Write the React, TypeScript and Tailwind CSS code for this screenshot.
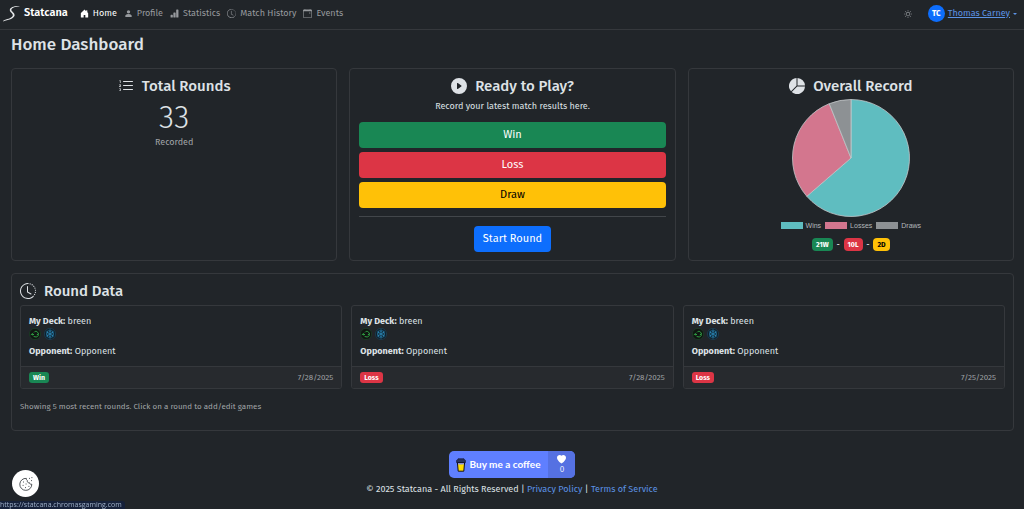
import React from 'react';
import {
  BsBarChartFill,
  BsCalendarEvent,
  BsClockHistory,
  BsHeartFill,
  BsHouseDoorFill,
  BsListOl,
  BsPersonFill,
  BsPieChartFill,
  BsPlayCircleFill,
  BsSun,
} from 'react-icons/bs';

const navItems = [
  { label: 'Home', icon: BsHouseDoorFill, active: true },
  { label: 'Profile', icon: BsPersonFill, active: false },
  { label: 'Statistics', icon: BsBarChartFill, active: false },
  { label: 'Match History', icon: BsClockHistory, active: false },
  { label: 'Events', icon: BsCalendarEvent, active: false },
];

const rounds = [
  { deck: 'breen', opponent: 'Opponent', result: 'Win', date: '7/28/2025' },
  { deck: 'breen', opponent: 'Opponent', result: 'Loss', date: '7/28/2025' },
  { deck: 'breen', opponent: 'Opponent', result: 'Loss', date: '7/25/2025' },
];

const record = [
  { label: 'Wins', count: 21, color: '#5fbdc0' },
  { label: 'Losses', count: 10, color: '#d3768e' },
  { label: 'Draws', count: 2, color: '#8d9194' },
];

function Logo() {
  return (
    <svg viewBox="0 0 18 17" className="h-[17px] w-[18px]" fill="#e4e6e8">
      <path d="M17 1.2C12 1.4 8.2 3 8.4 5C8.6 6.8 12 7.8 11.6 10.6C11 13.8 5 15.2 0.2 16.4C0.2 15.6 0.8 15.2 1.6 15C5.4 14 9.2 12.8 9.8 10.6C10.4 8.4 6.6 7.4 6.8 5C7 2.4 11.6 0.6 17 1.2Z" />
    </svg>
  );
}

function Navbar() {
  return (
    <nav className="flex h-[30px] items-center border-b border-[#35383c] pr-[7px] pb-0.5 pl-[3px]">
      <a href="#home" className="flex items-center gap-[3px] text-[11px] font-semibold text-white">
        <Logo />
        Statcana
      </a>
      <ul className="ml-3 flex items-center gap-[7px]">
        {navItems.map(({ label, icon: Icon, active }) => (
          <li key={label}>
            <a
              href="#nav"
              className={
                active
                  ? 'flex items-center gap-1 text-[9px] text-white'
                  : 'flex items-center gap-1 text-[9px] text-[#979a9e]'
              }
            >
              <Icon className="size-[9px]" />
              {label}
            </a>
          </li>
        ))}
      </ul>
      <button type="button" aria-label="Toggle theme" className="ml-auto text-[#b4b8bb]">
        <BsSun className="size-2" />
      </button>
      <a href="#account" className="ml-4 flex items-center gap-[3px] text-[9px] text-[#5c93e6]">
        <span className="flex size-[17px] items-center justify-center rounded-full bg-[#0d6efd] text-[8px] font-bold text-white">
          TC
        </span>
        <span className="underline">Thomas Carney</span>
        <span className="border-x-2 border-t-2 border-x-transparent border-t-[#5c93e6]" />
      </a>
    </nav>
  );
}

function CardTitle({ icon: Icon, children }: { icon: React.ElementType; children: React.ReactNode }) {
  return (
    <h2 className="flex items-center justify-center gap-2 text-[15px] leading-[18px] font-medium">
      <Icon className="size-4" />
      {children}
    </h2>
  );
}

function RecordPie() {
  const total = record.reduce((sum, r) => sum + r.count, 0);
  let angle = 0;
  return (
    <svg viewBox="0 0 118 118" className="size-[118px]" role="img" aria-label="Overall record">
      {record.map((r) => {
        const start = angle;
        angle += (r.count / total) * Math.PI * 2;
        const large = r.count / total > 0.5 ? 1 : 0;
        const x1 = 59 + 58.5 * Math.sin(start);
        const y1 = 59 - 58.5 * Math.cos(start);
        const x2 = 59 + 58.5 * Math.sin(angle);
        const y2 = 59 - 58.5 * Math.cos(angle);
        return (
          <path
            key={r.label}
            d={`M59 59L${x1} ${y1}A58.5 58.5 0 ${large} 1 ${x2} ${y2}Z`}
            fill={r.color}
            stroke="#c4c8ca"
            strokeWidth="0.8"
          />
        );
      })}
    </svg>
  );
}

function RecycleIcon() {
  return (
    <svg viewBox="0 0 12 12" className="size-3" fill="none">
      <circle cx="6" cy="6" r="5.6" fill="#101512" stroke="#1d4a26" strokeWidth="0.6" />
      <path
        d="M1.8 6.8L3.6 5.6L5 7M3.6 5.8V7.4M5 4.4C5.8 3 7.8 3 8.6 4.2M8.6 4.2L9.6 6L7.8 6.8M9.4 6.4C9.6 8.4 7.6 9.4 6 8.8L4.6 8.4"
        stroke="#2fa043"
      />
    </svg>
  );
}

function SnowflakeIcon() {
  return (
    <svg viewBox="0 0 12 12" className="size-3" fill="none">
      <circle cx="6" cy="6" r="5.6" fill="#10202b" stroke="#1c4a63" strokeWidth="0.6" />
      <path
        d="M6 1.4V10.6M2.2 3.8L9.8 8.2M9.8 3.8L2.2 8.2M4.6 2.2L6 3.6L7.4 2.2M4.6 9.8L6 8.4L7.4 9.8M2 5.4L3.8 4.8L3.6 2.8M10 5.4L8.2 4.8L8.4 2.8M2 6.6L3.8 7.2L3.6 9.2M10 6.6L8.2 7.2L8.4 9.2"
        stroke="#2c8cbd"
        strokeWidth="0.8"
      />
    </svg>
  );
}

function RoundCard({ round }: { round: (typeof rounds)[number] }) {
  return (
    <article className="overflow-hidden rounded-[3px] border border-[#35383c]">
      <div className="h-[60px] px-2 pt-[9px] text-[9px] leading-3">
        <p><strong>My Deck:</strong> {round.deck}</p>
        <div className="mt-px flex gap-[3px]">
          <RecycleIcon />
          <SnowflakeIcon />
        </div>
        <p className="mt-[5px]"><strong>Opponent:</strong> {round.opponent}</p>
      </div>
      <footer className="flex h-[22px] items-center justify-between border-t border-[#35383c] bg-[#272a2e] px-2">
        <span
          className={
            round.result === 'Win'
              ? 'rounded-[3px] bg-[#198754] px-1 text-[7px] leading-[11px] font-bold text-white'
              : 'rounded-[3px] bg-[#dc3545] px-1 text-[7px] leading-[11px] font-bold text-white'
          }
        >
          {round.result}
        </span>
        <time className="text-[8px] text-[#a0a4a7]">{round.date}</time>
      </footer>
    </article>
  );
}

function CoffeeCup() {
  return (
    <svg viewBox="0 0 10 14" className="h-[14px] w-[10px]">
      <path d="M1.4 4.4L2.2 13.2H7.8L8.6 4.4Z" fill="#ffdd00" stroke="#0d0c22" />
      <path d="M2 0.8H8L8.8 2.4H9.4V4.6H0.6V2.4H1.2Z" fill="#27345f" stroke="#0d0c22" strokeWidth="0.6" />
      <path d="M2 5H8L7.8 6.6H2.2Z" fill="#8893d8" />
    </svg>
  );
}

function CookieIcon() {
  return (
    <svg viewBox="0 0 16 16" className="size-4" fill="none" stroke="#3f4448" strokeWidth="0.9">
      <path d="M8.4 2.4A6 6 0 1 0 13.8 8.2C12.6 8.6 11.6 8 11.6 6.8C10 7 9 6 9.4 4.6C8.6 4.2 8.2 3.4 8.4 2.4Z" />
      <path d="M5 6h1M7.6 8h1M4.6 9.4h1M7 11.6h1M10.4 10.4h1M11 2.4h1M13.4 1.6h1M13 4.6h1" />
    </svg>
  );
}

export default function App() {
  return (
    <div className="flex min-h-screen flex-col bg-[#212529] font-['Fira_Sans','Noto_Sans',sans-serif] text-[#dee2e6]">
      <Navbar />
      <main className="pr-[10px] pl-[11px]">
        <h1 className="mt-1 text-[17px] leading-[22px] font-medium">Home Dashboard</h1>

        <div className="mt-3 grid grid-cols-3 gap-3">
          <section className="rounded-[4px] border border-[#35383c] px-[9px] pt-2 text-center">
            <CardTitle icon={BsListOl}>Total Rounds</CardTitle>
            <p className="mt-1 text-[31px] leading-[38px] font-light">33</p>
            <p className="text-[9px] leading-[11px] text-[#a0a4a7]">Recorded</p>
          </section>

          <section className="rounded-[4px] border border-[#35383c] px-[9px] pt-2 pb-2 text-center">
            <CardTitle icon={BsPlayCircleFill}>Ready to Play?</CardTitle>
            <p className="mt-1 text-[9px] leading-[14px]">Record your latest match results here.</p>
            <div className="mt-[9px] flex flex-col gap-1 text-[11px]">
              <button type="button" className="h-[26px] rounded-[4px] bg-[#198754] text-white">Win</button>
              <button type="button" className="h-[26px] rounded-[4px] bg-[#dc3545] text-white">Loss</button>
              <button type="button" className="h-[26px] rounded-[4px] bg-[#ffc107] text-black">Draw</button>
            </div>
            <hr className="my-2 border-[#42464a]" />
            <button type="button" className="h-[26px] rounded-[4px] bg-[#0d6efd] px-[9px] text-[11px] text-white">
              Start Round
            </button>
          </section>

          <section className="flex flex-col items-center rounded-[4px] border border-[#35383c] px-[9px] pt-2">
            <CardTitle icon={BsPieChartFill}>Overall Record</CardTitle>
            <div className="mt-1">
              <RecordPie />
            </div>
            <ul className="mt-1 flex gap-1 font-['Liberation_Sans',sans-serif] text-[7px] leading-[9px] text-[#b4b8bb]">
              {record.map((r) => (
                <li key={r.label} className="flex items-center gap-[3px]">
                  <span className="h-[7px] w-[22px]" style={{ backgroundColor: r.color }} />
                  {r.label}
                </li>
              ))}
            </ul>
            <p className="mt-2 flex items-center gap-1 text-[7px] leading-[13px] font-bold">
              <span className="rounded-[4px] bg-[#198754] px-1 text-white">21W</span>-
              <span className="rounded-[4px] bg-[#dc3545] px-1 text-white">10L</span>-
              <span className="rounded-[4px] bg-[#ffc107] px-1 text-black">2D</span>
            </p>
          </section>
        </div>

        <section className="mt-3 rounded-[4px] border border-[#35383c] px-2 pt-2 pb-[17px]">
          <div className="flex">
            <CardTitle icon={BsClockHistory}>Round Data</CardTitle>
          </div>
          <div className="mt-[5px] grid grid-cols-3 gap-[9px]">
            {rounds.map((round, i) => (
              <RoundCard key={i} round={round} />
            ))}
          </div>
          <p className="mt-3 text-[8px] leading-3 text-[#a0a4a7]">
            Showing 5 most recent rounds. Click on a round to add/edit games
          </p>
        </section>
      </main>

      <footer className="mt-5 flex flex-col items-center">
        <a href="#coffee" className="flex h-[27px] overflow-hidden rounded-[5px] bg-[#5f7fff] font-['Lato',sans-serif] text-white">
          <span className="flex items-center gap-1 pr-2 pl-[7px] text-[10px] font-bold">
            <CoffeeCup />
            Buy me a coffee
          </span>
          <span className="flex w-[27px] flex-col items-center justify-center gap-px bg-[#5571e2] text-[7px] leading-[9px]">
            <BsHeartFill className="size-[9px]" />
            0
          </span>
        </a>
        <p className="mt-[5px] text-[9px] leading-3">
          © 2025 Statcana - All Rights Reserved |{' '}
          <a href="#privacy" className="text-[#5c93e6]">Privacy Policy</a> |{' '}
          <a href="#terms" className="text-[#5c93e6]">Terms of Service</a>
        </p>
      </footer>

      <button
        type="button"
        aria-label="Cookie settings"
        className="fixed bottom-3 left-3 flex size-[27px] items-center justify-center rounded-full bg-white"
      >
        <CookieIcon />
      </button>
      <div className="fixed bottom-0 left-0 rounded-tr-[3px] bg-[#16213a] pr-[3px] font-['Open_Sans',sans-serif] text-[7px] leading-[8px] text-[#9fb0c8]">
        https://statcana.chromasgaming.com
      </div>
    </div>
  );
}
